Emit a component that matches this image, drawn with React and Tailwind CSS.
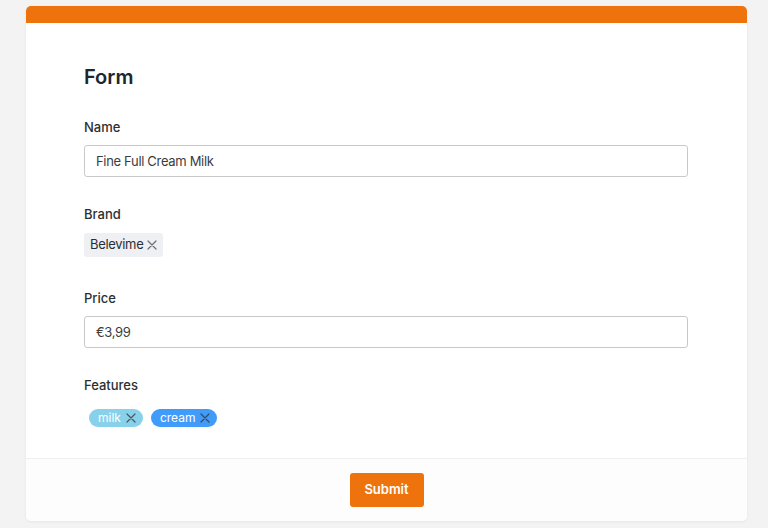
import React from "react";

function CloseIcon({ className }) {
  return (
    <svg viewBox="0 0 12 12" className={className} fill="none" stroke="currentColor" strokeWidth="1.2" strokeLinecap="round">
      <path d="M2 2l8 8M10 2l-8 8" />
    </svg>
  );
}

function Label({ children }) {
  return <div className="text-[13px] leading-[20px] font-medium text-[#2b2f33]">{children}</div>;
}

function TextInput({ value }) {
  return (
    <input
      readOnly
      value={value}
      className="mt-[8px] block w-[604px] h-[32px] rounded-[3px] border border-[#c9c9c9] bg-white px-[11px] text-[13px] tracking-[-0.025em] text-[#3a3d40] outline-none"
    />
  );
}

export default function App() {
  return (
    <div
      className="min-h-[528px] bg-[#f3f3f3] pt-[6px] pl-[26px]"
      style={{ fontFamily: "Inter, 'Noto Sans', sans-serif" }}
    >
      <div className="w-[721px] h-[515px] rounded-[5px] bg-white shadow-[0_1px_3px_rgba(0,0,0,0.06)] overflow-hidden flex flex-col">
        <div className="h-[17px] bg-[#ee730c]" />
        <div className="flex-1 pl-[58px] pt-[40px]">
          <h1 className="text-[20px] leading-[28px] font-semibold text-[#22262a]">Form</h1>

          <div className="mt-[26px]">
            <Label>Name</Label>
            <TextInput value="Fine Full Cream Milk" />
          </div>

          <div className="mt-[27px]">
            <Label>Brand</Label>
            <div className="mt-[9px] flex">
              <span className="inline-flex items-center h-[24px] rounded-[3px] bg-[#eef0f3] pl-[6px] pr-[5px] text-[13px] tracking-[-0.025em] text-[#2b2f33]">
                Belevime
                <CloseIcon className="ml-[3px] w-[12px] h-[12px] text-[#6b6f74]" />
              </span>
            </div>
          </div>

          <div className="mt-[31px]">
            <Label>Price</Label>
            <TextInput value="€3,99" />
          </div>

          <div className="mt-[27px]">
            <Label>Features</Label>
            <div className="mt-[14px] flex gap-[8px] pl-[5px]">
              <span className="inline-flex items-center h-[18px] rounded-full bg-[#88d1ea] pl-[9px] pr-[6px] text-[12px] text-white">
                milk
                <CloseIcon className="ml-[4px] w-[12px] h-[12px] text-[#4d5560]" />
              </span>
              <span className="inline-flex items-center h-[18px] rounded-full bg-[#419bf9] pl-[9px] pr-[6px] text-[12px] text-white">
                cream
                <CloseIcon className="ml-[4px] w-[12px] h-[12px] text-[#3a4a5e]" />
              </span>
            </div>
          </div>
        </div>
        <div className="h-[63px] border-t border-[#efefef] bg-[#fdfdfd] flex justify-center pt-[14px]">
          <button className="w-[74px] h-[34px] rounded-[3px] bg-[#ee730c] text-white text-[13px] font-semibold">
            Submit
          </button>
        </div>
      </div>
    </div>
  );
}
